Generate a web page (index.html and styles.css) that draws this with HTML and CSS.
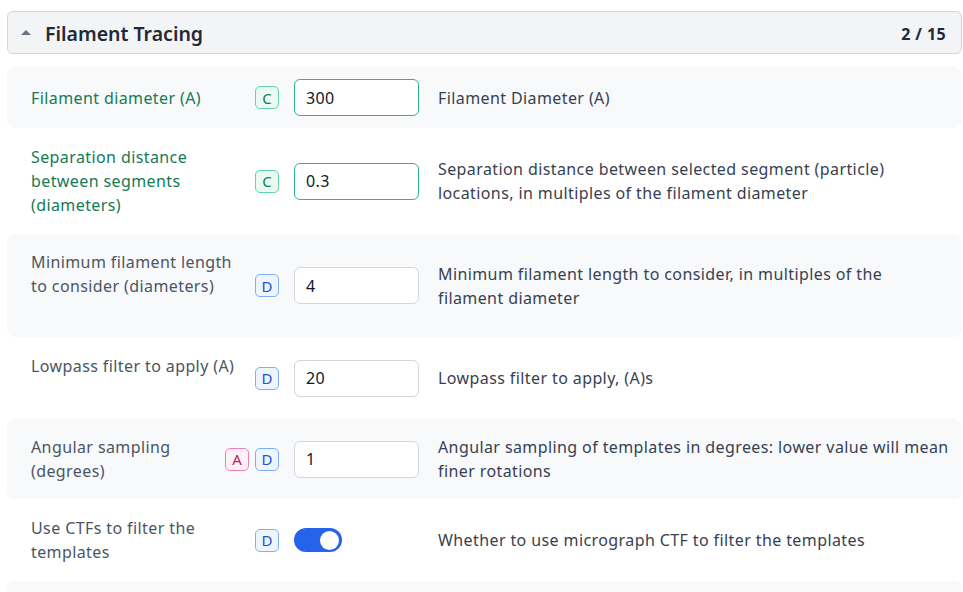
FILE: index.html
```html
<!DOCTYPE html>
<html>
<head>
<meta charset="utf-8">
<link rel="stylesheet" href="styles.css">
</head>
<body>
<div class="panel">
  <div class="header">
    <span class="caret"></span>
    <span class="title">Filament Tracing</span>
    <span class="count">2 / 15</span>
  </div>
  <div class="rows">
    <div class="row shade r1">
      <div class="label changed">Filament diameter (A)</div>
      <div class="badges"><span class="badge c">C</span></div>
      <input class="field changed" value="300">
      <div class="desc">Filament Diameter (A)</div>
    </div>
    <div class="row">
      <div class="label changed">Separation distance between segments (diameters)</div>
      <div class="badges"><span class="badge c">C</span></div>
      <input class="field changed" value="0.3">
      <div class="desc">Separation distance between selected segment (particle) locations, in multiples of the filament diameter</div>
    </div>
    <div class="row shade r3">
      <div class="label">Minimum filament length to consider (diameters)</div>
      <div class="badges"><span class="badge d">D</span></div>
      <input class="field" value="4">
      <div class="desc">Minimum filament length to consider, in multiples of the filament diameter</div>
    </div>
    <div class="row">
      <div class="label">Lowpass filter to apply (A)</div>
      <div class="badges"><span class="badge d">D</span></div>
      <input class="field" value="20">
      <div class="desc">Lowpass filter to apply, (A)s</div>
    </div>
    <div class="row shade">
      <div class="label">Angular sampling (degrees)</div>
      <div class="badges"><span class="badge a">A</span><span class="badge d">D</span></div>
      <input class="field" value="1">
      <div class="desc">Angular sampling of templates in degrees: lower value will mean finer rotations</div>
    </div>
    <div class="row">
      <div class="label">Use CTFs to filter the templates</div>
      <div class="badges"><span class="badge d">D</span></div>
      <div class="switch-cell"><span class="switch"><span class="knob"></span></span></div>
      <div class="desc">Whether to use micrograph CTF to filter the templates</div>
    </div>
    <div class="row shade"></div>
  </div>
</div>
</body>
</html>
```
FILE: styles.css
```css
html, body {
  margin: 0;
  padding: 0;
  background: #ffffff;
  overflow: hidden;
}
body {
  font-family: "Noto Sans", "Open Sans", sans-serif;
  font-size: 16px;
  letter-spacing: 0.4px;
  color: #374151;
}
.panel {
  margin: 11px 0 0 7px;
  width: 955px;
}
.header {
  display: flex;
  align-items: center;
  box-sizing: border-box;
  height: 43px;
  border: 1px solid #d1d5db;
  border-radius: 6px;
  background: #f3f4f6;
  padding: 2px 15px 0 13px;
}
.caret {
  width: 0;
  height: 0;
  border-left: 5px solid transparent;
  border-right: 5px solid transparent;
  border-bottom: 5px solid #6b7280;
  margin-right: 14px;
  margin-top: -3px;
}
.title {
  font-size: 19.5px;
  font-weight: 600;
  letter-spacing: 0;
  color: #1f2937;
  flex: 1;
}
.count {
  font-size: 16px;
  font-weight: 700;
  color: #1f2937;
}
.rows {
  margin-top: 13px;
  display: flex;
  flex-direction: column;
  gap: 1px;
}
.row {
  display: flex;
  align-items: center;
  padding: 16px 12px 16px 24px;
  min-height: 48px;
  border-radius: 8px;
}
.row.shade {
  background: #f8f9fb;
}
.row.r1 {
  min-height: 0;
  height: 61px;
  padding-top: 0;
  padding-bottom: 0;
  box-sizing: border-box;
}
.row.r1 .label {
  align-self: center;
}
.row.r3 {
  min-height: 71px;
}
.label {
  flex: 0 0 210px;
  align-self: flex-start;
  line-height: 24px;
  color: #4b5563;
}
.label.changed {
  color: #157a55;
}
.row:not(.r1) .label.changed {
  align-self: center;
}
.badges {
  flex: 0 0 38px;
  min-width: 0;
  display: flex;
  justify-content: flex-end;
  gap: 6px;
}
.badge {
  flex: 0 0 auto;
  box-sizing: border-box;
  width: 24px;
  height: 23px;
  border-radius: 5px;
  border: 1px solid;
  display: flex;
  align-items: center;
  justify-content: center;
  font-size: 15px;
  letter-spacing: 0;
}
.badge.c {
  border-color: #5fd6a6;
  background: #eafaf3;
  color: #137a52;
}
.badge.d {
  border-color: #7ab0f8;
  background: #eef5ff;
  color: #2450d8;
}
.badge.a {
  border-color: #f080b4;
  background: #fdf1f7;
  color: #c0245f;
}
.field {
  flex: 0 0 125px;
  box-sizing: border-box;
  width: 125px;
  height: 37px;
  margin-left: 15px;
  border: 1px solid #d4d6de;
  border-radius: 6px;
  background: #ffffff;
  padding: 0 11px;
  font-family: "Noto Sans", "Open Sans", sans-serif;
  font-size: 16px;
  letter-spacing: 0.4px;
  color: #111827;
  outline: none;
}
.field.changed {
  border-color: #2bb884;
}
.switch-cell {
  flex: 0 0 125px;
  margin-left: 15px;
  display: flex;
  align-items: center;
}
.switch {
  width: 48px;
  height: 24px;
  border-radius: 12px;
  background: #2563eb;
  display: flex;
  align-items: center;
  justify-content: flex-end;
  padding: 0 3px;
  box-sizing: border-box;
}
.knob {
  width: 19px;
  height: 19px;
  border-radius: 50%;
  background: #ffffff;
}
.desc {
  flex: 1;
  margin-left: 19px;
  line-height: 24px;
  color: #374151;
}
```
